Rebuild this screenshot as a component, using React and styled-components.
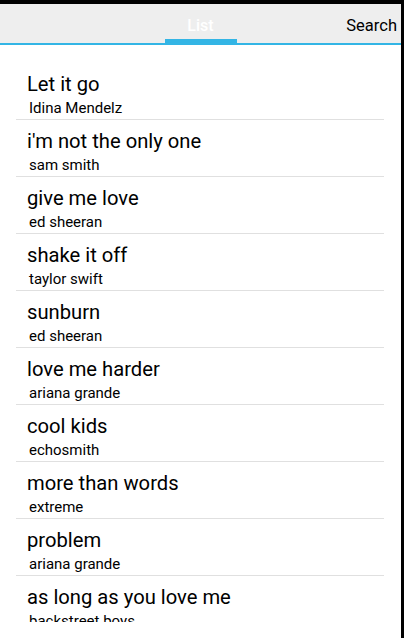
import styled, {createGlobalStyle} from 'styled-components';

const songs = [
  {title: 'Let it go', artist: 'Idina Mendelz'},
  {title: "i'm not the only one", artist: 'sam smith'},
  {title: 'give me love', artist: 'ed sheeran'},
  {title: 'shake it off', artist: 'taylor swift'},
  {title: 'sunburn', artist: 'ed sheeran'},
  {title: 'love me harder', artist: 'ariana grande'},
  {title: 'cool kids', artist: 'echosmith'},
  {title: 'more than words', artist: 'extreme'},
  {title: 'problem', artist: 'ariana grande'},
  {title: 'as long as you love me', artist: 'backstreet boys'},
];

export default function App() {
  return (
    <>
      <GlobalStyle />
      <StyledScreen>
        <StyledTabBar>
          <span />
          <StyledTab active>List</StyledTab>
          <StyledSearchTab>Search</StyledSearchTab>
        </StyledTabBar>
        <StyledList>
          {songs.map(song => (
            <StyledItem key={song.title}>
              <StyledTitle>{song.title}</StyledTitle>
              <StyledArtist>{song.artist}</StyledArtist>
            </StyledItem>
          ))}
        </StyledList>
      </StyledScreen>
    </>
  );
}

const GlobalStyle = createGlobalStyle`
  body {
    margin: 0;
    background: #fff;
    font-family: Roboto, "Liberation Sans", sans-serif;
  }
`;

const StyledScreen = styled.div`
  height: 638px;
  box-sizing: border-box;
  border-top: 4px solid #000;
  border-right: 3px solid #000;
  padding-bottom: 16px;
  display: flex;
  flex-direction: column;
  overflow: hidden;
`;

const StyledTabBar = styled.div`
  flex: none;
  height: 41px;
  box-sizing: border-box;
  padding-top: 2px;
  background: #eeeeee;
  border-bottom: 2px solid #33b5e5;
  display: grid;
  grid-template-columns: 1fr 72px 1fr;
`;

const StyledTab = styled.div`
  display: flex;
  align-items: center;
  justify-content: center;
  font-size: 16px;
  font-weight: 500;
  color: ${p => (p.active ? '#fff' : '#000')};
  box-shadow: ${p => (p.active ? 'inset 0 -6px 0 #33b5e5' : 'none')};
  margin-bottom: -2px;
`;

const StyledSearchTab = styled.div`
  display: flex;
  align-items: center;
  justify-content: flex-end;
  padding-right: 4px;
  font-size: 16.5px;
  color: #000;
  margin-bottom: -2px;
`;

const StyledList = styled.div`
  flex: 1;
  overflow: hidden;
  padding: 18px 17px 0 16px;
`;

const StyledItem = styled.div`
  padding: 9px 0 0 11px;
  height: 57px;
  box-sizing: border-box;
  border-bottom: 1px solid #e0e0e0;
`;

const StyledTitle = styled.div`
  font-size: 20.2px;
  line-height: 24px;
  color: #000;
`;

const StyledArtist = styled.div`
  margin-top: 3px;
  padding-left: 2px;
  font-size: 15px;
  line-height: 18px;
  color: #000;
`;
